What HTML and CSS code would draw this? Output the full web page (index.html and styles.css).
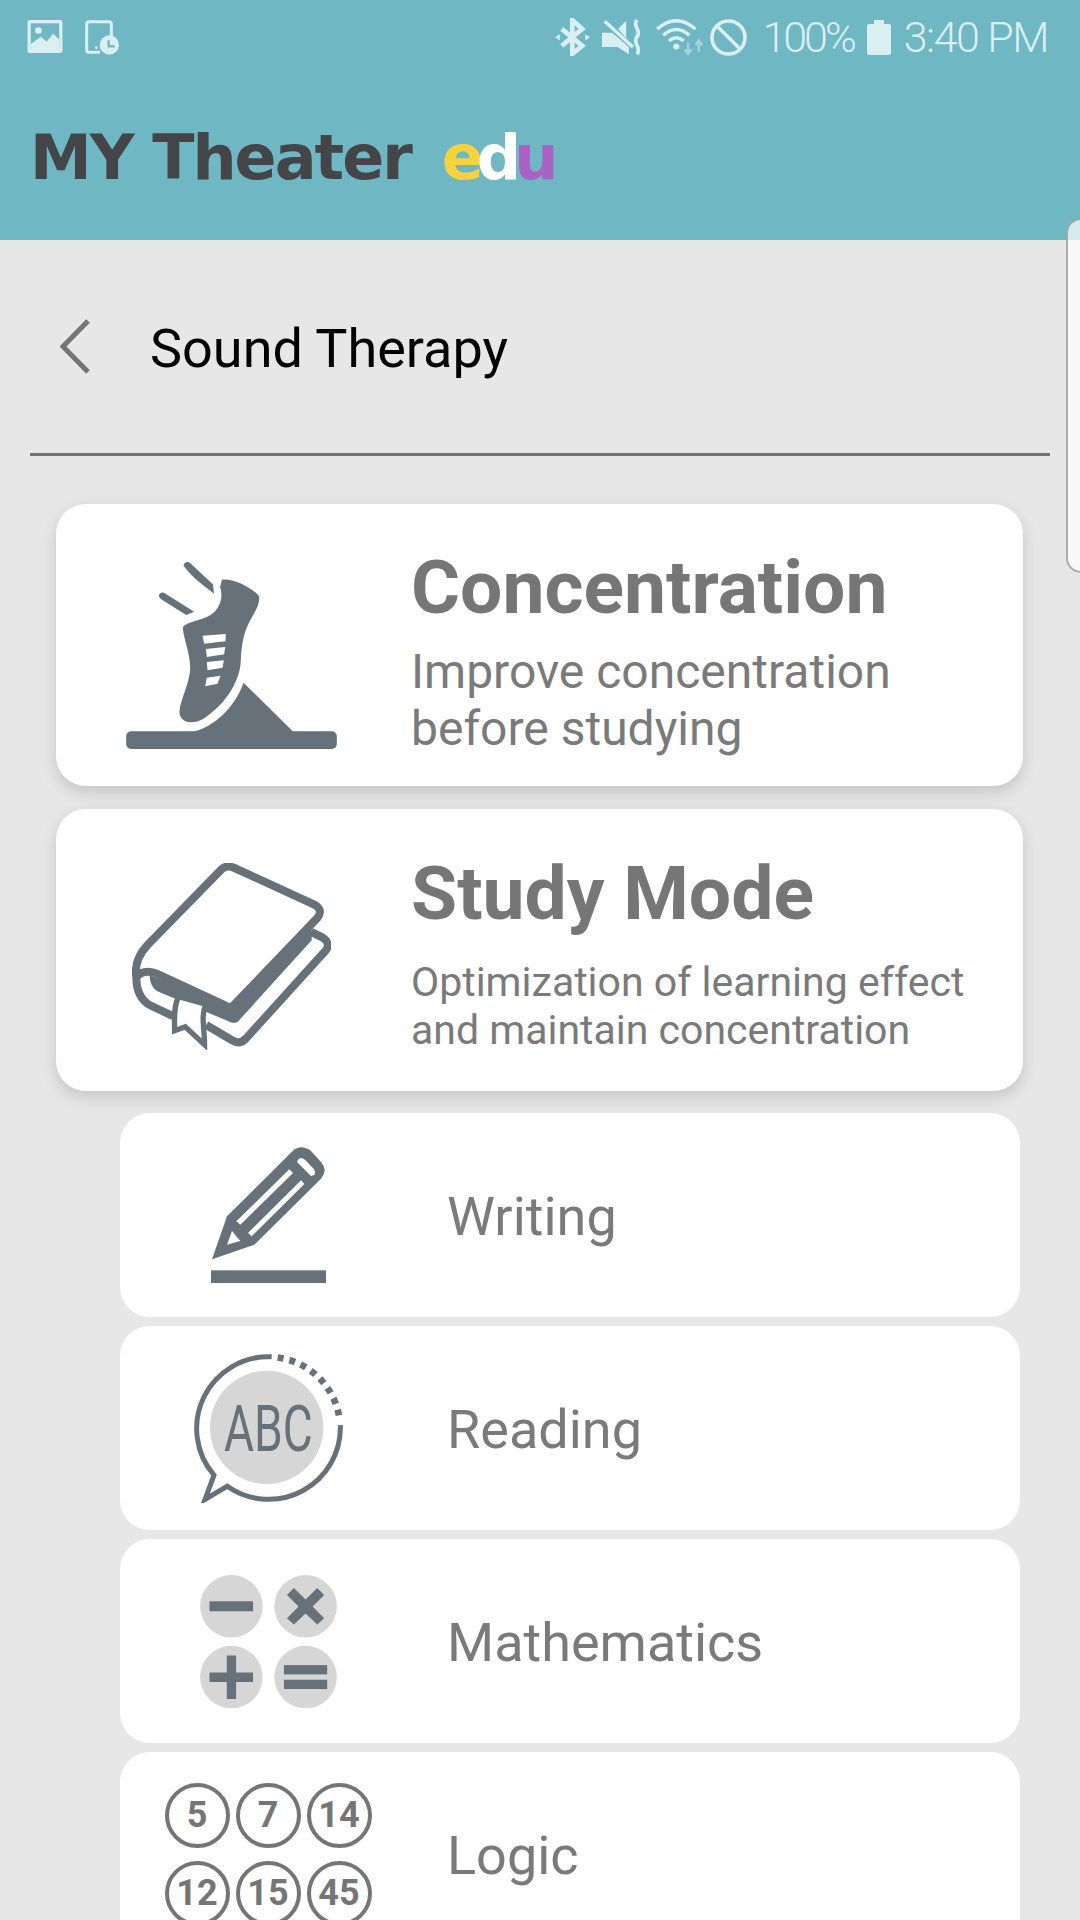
FILE: index.html
```html
<!DOCTYPE html>
<html lang="en">

<head>
    <meta charset="UTF-8">
    <meta name="viewport" content="width=device-width, initial-scale=1.0">
    <title>Sound Therapy</title>
    <link rel="stylesheet" href="styles.css">
</head>

<body>
    <header class="app-header">
        <div class="status-bar">
            <div class="status-left">
                <svg class="ic-picture" viewBox="22 45 106 100">
                    <rect x="22" y="45" width="106" height="100" rx="6" fill="#d9eff1"/>
                    <rect x="32" y="55" width="86" height="80" fill="#6fb7c3"/>
                    <circle cx="55" cy="77" r="10" fill="#d9eff1"/>
                    <path d="M32 118 L62 96 L80 110 L100 86 L118 104 L118 137 L32 137 Z" fill="#d9eff1"/>
                </svg>
                <svg class="ic-phone" viewBox="195 45 102 105">
                    <path d="M240 142 H208 Q200 142 200 134 V58 Q200 50 208 50 H266 Q274 50 274 58 V96" fill="none" stroke="#d9eff1" stroke-width="9"/>
                    <circle cx="229" cy="128" r="4" fill="#d9eff1"/>
                    <circle cx="268" cy="120" r="29" fill="#d9eff1"/>
                    <path d="M266 106 V124 H284" fill="none" stroke="#6fb7c3" stroke-width="7"/>
                </svg>
            </div>
            <div class="status-right">
                <svg class="ic-bt" viewBox="52 40 103 112">
                    <path d="M72 72 L132 122 L103 146 V46 L132 72 L72 122" fill="none" stroke="#d9eff1" stroke-width="14"/>
                    <path d="M52 97 L66 88 V106 Z M155 97 L141 88 V106 Z" fill="#d9eff1"/>
                </svg>
                <svg class="ic-mute" viewBox="192 44 113 108">
                    <path d="M192 84 H222 L272 126 V148 L238 126 H192 Z M240 72 L264 48 V100 Z" fill="#d9eff1"/>
                    <path d="M200 50 L284 126" stroke="#d9eff1" stroke-width="10"/>
                    <path d="M296 46 C280 66 312 76 296 96 C280 116 312 126 296 148" fill="none" stroke="#d9eff1" stroke-width="11"/>
                </svg>
                <svg class="ic-wifi" viewBox="355 38 145 110">
                    <path d="M358 68 Q415 18 472 68 M376 86 Q415 52 454 86 M393 103 Q415 84 437 103" fill="none" stroke="#d9eff1" stroke-width="10"/>
                    <circle cx="415" cy="120" r="9" fill="#d9eff1"/>
                    <path d="M450 108 V142 M440 128 L450 142 L460 128 M482 136 V102 M472 116 L482 102 L492 116" fill="none" stroke="#a5d3da" stroke-width="7"/>
                </svg>
                <svg class="ic-dnd" viewBox="515 38 110 112">
                    <circle cx="570" cy="94" r="50" fill="none" stroke="#d9eff1" stroke-width="11"/>
                    <path d="M535 59 L605 129" stroke="#d9eff1" stroke-width="11"/>
                </svg>
                <span class="status-pct">100%</span>
                <div class="battery"></div>
                <span class="status-time">3:40 PM</span>
            </div>
        </div>
        <div class="logo">
            <span class="logo-name">MY Theater</span>
            <span class="logo-edu"><span class="edu-e">e</span><span class="edu-d">d</span><span class="edu-u">u</span></span>
        </div>
    </header>

    <div class="title-bar">
        <svg class="back-icon" viewBox="0 0 30 55">
            <path d="M28 2 L3 27.5 L28 53" fill="none" stroke="#757575" stroke-width="5"/>
        </svg>
        <span class="page-title">Sound Therapy</span>
    </div>

    <main class="mode-list">
        <div class="card">
            <div class="card-icon shoe-slot">
                <svg class="ic-shoe" viewBox="258 212 632 564">
                    <rect x="258" y="723" width="632" height="53" rx="15"/>
                    <path d="M455 725 C520 712 585 650 610 577 L760 725 Z"/>
                    <path d="M545 268 C580 262 640 295 657 318 C660 345 640 370 625 400 C610 430 603 470 602 510 C600 570 560 640 490 685 C460 702 425 700 418 670 C415 640 445 590 450 540 C452 490 430 450 428 410 C440 395 480 392 510 375 C540 355 550 320 540 290 Z"/>
                    <path class="cut" d="M487 436 L557 431 L556 453 L492 460 Z M497 476 L555 470 L552 492 L500 500 Z M500 515 L551 510 L547 532 L502 540 Z M500 562 L541 556 L532 580 L495 588 Z"/>
                    <path d="M430 226 C432 214 445 212 452 220 L518 282 L522 310 C490 285 455 260 430 226 Z"/>
                    <path d="M356 318 C356 306 368 303 376 310 L462 364 L438 374 L362 326 Z"/>
                </svg>
            </div>
            <div class="card-text">
                <h2 class="card-title">Concentration</h2>
                <p class="card-desc">Improve concentration<br>before studying</p>
            </div>
        </div>
        <div class="card">
            <div class="card-icon book-slot">
                <svg class="ic-book" viewBox="272 188 598 562">
                    <path d="M325 525 L555 612 Q570 618 585 605 L812 370 V420 L590 665 Q580 672 565 665 L345 572 Q325 555 325 525 Z"/>
                    <path class="line" d="M285 532 C278 490 295 460 318 435 L540 208 Q555 192 580 203 L818 312 Q848 328 830 352 L575 618 Q565 625 550 615 L345 520 Q305 505 285 532 C285 570 300 600 325 615 L395 648"/>
                    <path class="line" d="M495 675 L575 722 Q595 735 615 715 L855 450 Q870 430 845 412 L810 395"/>
                    <path class="ribbon" d="M412 590 C396 620 400 660 400 692 L432 680 L490 734 C490 680 478 650 494 612 Z"/>
                </svg>
            </div>
            <div class="card-text card-text-study">
                <h2 class="card-title">Study Mode</h2>
                <p class="card-desc card-desc-small">Optimization of learning effect<br>and maintain concentration</p>
            </div>
        </div>

        <div class="sub-list">
            <div class="row">
                <div class="row-icon">
                    <svg class="ic-pencil" viewBox="270 110 345 408">
                        <path d="M273 447 L318 318 L515 122 Q540 100 570 122 L600 155 Q622 180 600 205 L400 403 Z"/>
                        <path class="cut" d="M528 155 Q535 135 552 148 L578 175 Q590 195 570 197 Z M346 333 L505 177 L516 188 L358 343 Z M381 368 L540 210 L550 221 L392 378 Z M333 362 L358 392 L318 403 Z"/>
                        <rect x="270" y="480" width="345" height="38"/>
                    </svg>
                </div>
                <span class="row-label">Writing</span>
            </div>
            <div class="row">
                <div class="row-icon">
                    <svg class="ic-abc" viewBox="225 732 447 446">
                        <circle class="disc" cx="443" cy="952" r="170"/>
                        <path class="line-thin" d="M458 740 A215 215 0 0 0 285 1095 L258 1168 L325 1128 A215 215 0 0 0 664 945"/>
                        <path class="dots" d="M476 742 A215 215 0 0 1 662 930"/>
                        <text class="abc-text" transform="translate(315 1022) scale(0.72 1)">ABC</text>
                    </svg>
                </div>
                <span class="row-label">Reading</span>
            </div>
            <div class="row">
                <div class="row-icon">
                    <svg class="ic-math" viewBox="238 163 411 400">
                        <circle class="disc" cx="332" cy="257" r="94"/>
                        <circle class="disc" cx="555" cy="257" r="94"/>
                        <circle class="disc" cx="332" cy="470" r="94"/>
                        <circle class="disc" cx="555" cy="470" r="94"/>
                        <rect x="266" y="242" width="131" height="30"/>
                        <path d="M520 202 L555 237 L590 202 L611 223 L576 258 L611 293 L590 312 L555 279 L520 312 L499 293 L534 258 L499 223 Z"/>
                        <path d="M318 405 H346 V456 H397 V485 H346 V536 H318 V485 H266 V456 H318 Z"/>
                        <rect x="490" y="434" width="130" height="28"/>
                        <rect x="490" y="478" width="130" height="28"/>
                    </svg>
                </div>
                <span class="row-label">Mathematics</span>
            </div>
            <div class="row">
                <div class="row-icon">
                    <div class="num-grid">
                        <span class="num">5</span>
                        <span class="num">7</span>
                        <span class="num">14</span>
                        <span class="num">12</span>
                        <span class="num">15</span>
                        <span class="num">45</span>
                    </div>
                </div>
                <span class="row-label">Logic</span>
            </div>
        </div>
    </main>

    <div class="scroll-handle"></div>
</body>

</html>
```

FILE: styles.css
```css
* {
    box-sizing: border-box;
}

html, body {
    height: 1920px;
}

body {
    margin: 0;
    overflow: hidden;
    background-color: #e7e7e7;
    font-family: Roboto, "Liberation Sans", sans-serif;
}

svg {
    display: block;
    flex-shrink: 0;
}

h2, p {
    margin: 0;
}

.app-header {
    height: 240px;
    background-color: #6fb7c3;
}

.status-bar {
    height: 74px;
    padding: 18px 32px 0 27px;
    display: flex;
    justify-content: space-between;
    align-items: flex-start;
}
.status-left {
    display: flex;
    gap: 22px;
    padding-top: 2px;
}
.status-right {
    display: flex;
    align-items: center;
    height: 38px;
    color: #d9eff1;
    font-weight: 300;
    font-size: 43px;
}

.ic-picture { width: 36px; height: 33px; }
.ic-phone { width: 34px; height: 35px; }
.ic-bt { width: 35px; height: 38px; }
.ic-mute { width: 38px; height: 37px; margin-left: 12px; }
.ic-wifi { width: 49px; height: 37px; margin-left: 16px; }
.ic-dnd { width: 37px; height: 37px; margin-left: 5px; }

.status-pct {
    margin-left: 15px;
    letter-spacing: -3px;
}
.battery {
    position: relative;
    width: 24px;
    height: 31px;
    margin: 4px 13px 0;
    border-radius: 2px;
    background-color: #d9eff1;
}
.battery::before {
    content: "";
    position: absolute;
    top: -4px;
    left: 7px;
    width: 10px;
    height: 4px;
    background-color: #d9eff1;
}
.status-time {
    letter-spacing: -1.5px;
}

.logo {
    display: flex;
    gap: 31px;
    padding: 49px 0 0 30px;
    font-family: "DejaVu Sans", sans-serif;
    font-weight: 700;
    font-size: 62px;
    line-height: 70px;
}
.logo-name {
    color: #434548;
    letter-spacing: -2px;
}
.edu-e { color: #f5d33f; }
.edu-d { color: #ffffff; }
.edu-u { color: #a862c4; }
.logo-edu { letter-spacing: -7px; }

.title-bar {
    height: 216px;
    margin: 0 30px;
    padding-left: 30px;
    border-bottom: 3px solid #737373;
    display: flex;
    align-items: center;
    gap: 60px;
}
.back-icon {
    width: 30px;
    height: 55px;
}
.page-title {
    margin-top: 4px;
    font-size: 54px;
    color: #000000;
}

.mode-list {
    padding: 48px 0 0 56px;
}

.card {
    width: 967px;
    height: 282px;
    margin-bottom: 23px;
    display: flex;
    align-items: center;
    background-color: #ffffff;
    border-radius: 30px;
    box-shadow: 0 6px 16px rgba(0, 0, 0, 0.15);
}
.card-icon {
    width: 350px;
    margin-right: 5px;
    display: flex;
    justify-content: center;
    flex-shrink: 0;
    fill: #67717a;
}
.shoe-slot { margin-top: 20px; }
.book-slot { margin-top: 12px; }

.ic-shoe { width: 211px; height: 188px; }
.ic-book { width: 199px; height: 187px; }
.ic-shoe .cut, .ic-pencil .cut { fill: #ffffff; }
.line {
    fill: none;
    stroke: #67717a;
    stroke-width: 24;
}
.ribbon {
    fill: #ffffff;
    stroke: #67717a;
    stroke-width: 16;
}

.card-text {
    padding-top: 12px;
}
.card-text-study {
    padding-top: 4px;
}
.card-title {
    font-size: 75px;
    font-weight: 700;
    line-height: 84px;
    color: #767676;
}
.card-desc {
    margin-top: 14px;
    font-size: 48px;
    line-height: 57px;
    color: #7a7a7a;
}
.card-desc-small {
    margin-top: 23px;
    font-size: 41px;
    line-height: 48px;
}

.sub-list {
    width: 900px;
    margin: -1px 0 0 64px;
    display: flex;
    flex-direction: column;
    gap: 9px;
}
.row {
    height: 204px;
    flex-shrink: 0;
    display: flex;
    align-items: center;
    gap: 31px;
    background-color: #ffffff;
    border-radius: 30px;
}
.row-icon {
    width: 296px;
    display: flex;
    justify-content: center;
    fill: #67717a;
}
.row-label {
    padding-top: 3px;
    font-size: 54px;
    color: #7a7a7a;
}

.ic-pencil { width: 115px; height: 136px; }
.ic-abc { width: 149px; height: 149px; }
.ic-math { width: 137px; height: 133px; }
.disc {
    fill: #d6d6d6;
}
.line-thin {
    fill: none;
    stroke: #67717a;
    stroke-width: 15;
}
.dots {
    fill: none;
    stroke: #67717a;
    stroke-width: 20;
    stroke-dasharray: 18 18;
}
.abc-text {
    font-family: Roboto, sans-serif;
    font-size: 192px;
    font-weight: 400;
    fill: #67717a;
}

.num-grid {
    display: grid;
    grid-template-columns: repeat(3, 65px);
    gap: 13px 6px;
}
.num {
    height: 65px;
    display: flex;
    align-items: center;
    justify-content: center;
    border: 4px solid #757575;
    border-radius: 50%;
    font-size: 36px;
    font-weight: 700;
    color: #757575;
}

/* edge panel handle, sits over the page */
.scroll-handle {
    position: absolute;
    top: 218px;
    left: 1066px;
    width: 30px;
    height: 355px;
    background-color: rgba(255, 255, 255, 0.7);
    border: 2px solid rgba(130, 130, 130, 0.65);
    border-radius: 20px;
}
```
